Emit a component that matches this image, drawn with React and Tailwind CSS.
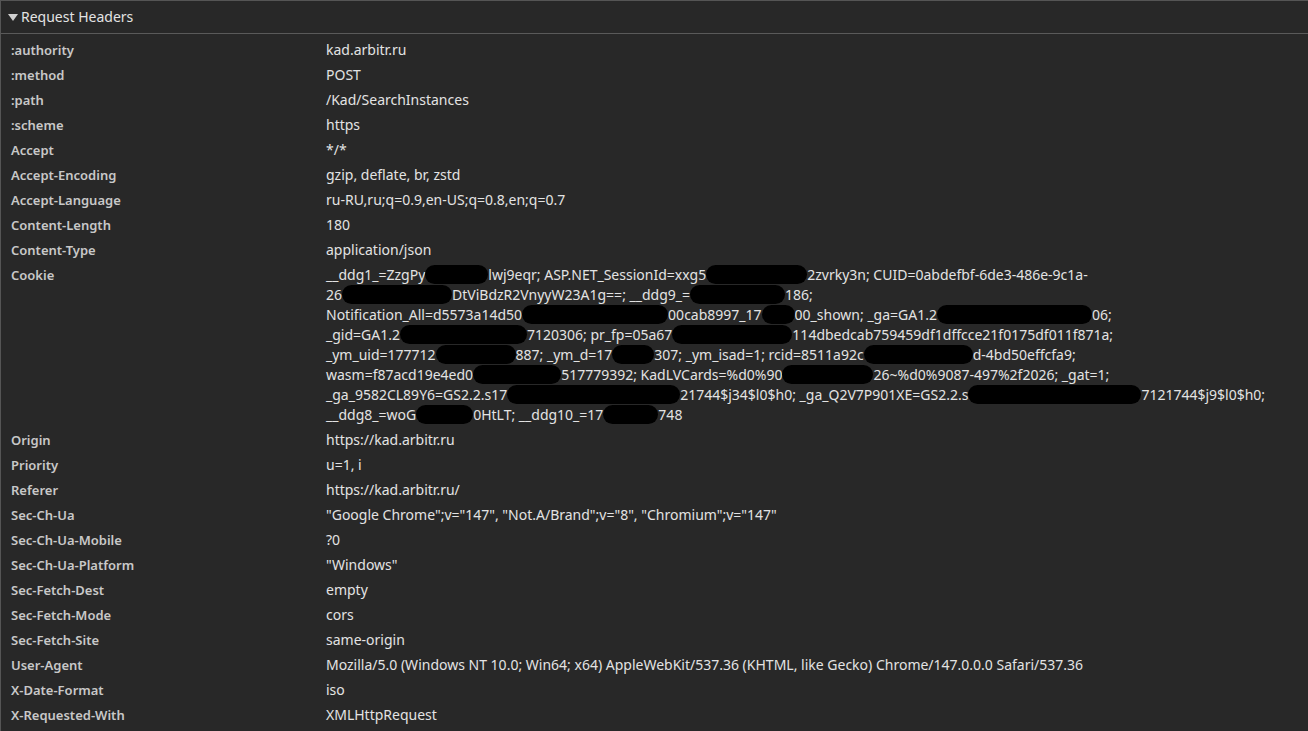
import React from "react";

const rows = [
  [":authority", "kad.arbitr.ru"],
  [":method", "POST"],
  [":path", "/Kad/SearchInstances"],
  [":scheme", "https"],
  ["Accept", "*/*"],
  ["Accept-Encoding", "gzip, deflate, br, zstd"],
  ["Accept-Language", "ru-RU,ru;q=0.9,en-US;q=0.8,en;q=0.7"],
  ["Content-Length", "180"],
  ["Content-Type", "application/json"],
  ["Cookie", null],
  ["Origin", "https://kad.arbitr.ru"],
  ["Priority", "u=1, i"],
  ["Referer", "https://kad.arbitr.ru/"],
  ["Sec-Ch-Ua", "\"Google Chrome\";v=\"147\", \"Not.A/Brand\";v=\"8\", \"Chromium\";v=\"147\""],
  ["Sec-Ch-Ua-Mobile", "?0"],
  ["Sec-Ch-Ua-Platform", "\"Windows\""],
  ["Sec-Fetch-Dest", "empty"],
  ["Sec-Fetch-Mode", "cors"],
  ["Sec-Fetch-Site", "same-origin"],
  ["User-Agent", "Mozilla/5.0 (Windows NT 10.0; Win64; x64) AppleWebKit/537.36 (KHTML, like Gecko) Chrome/147.0.0.0 Safari/537.36"],
  ["X-Date-Format", "iso"],
  ["X-Requested-With", "XMLHttpRequest"],
];

// each line: array of strings (text) or numbers (redaction blob width)
const cookieLines = [
  ["__ddg1_=ZzgPy", 63, "lwj9eqr; ASP.NET_SessionId=xxg5", 101, "2zvrky3n; CUID=0abdefbf-6de3-486e-9c1a-"],
  ["26", 110, "DtViBdzR2VnyyW23A1g==; __ddg9_=", 95, "186;"],
  ["Notification_All=d5573a14d50", 146, "00cab8997_17", 33, "00_shown; _ga=GA1.2", 155, "06;"],
  ["_gid=GA1.2", 127, "7120306; pr_fp=05a67", 120, "114dbedcab759459df1dffcce21f0175df011f871a;"],
  ["_ym_uid=177712", 80, "887; _ym_d=17", 42, "307; _ym_isad=1; rcid=8511a92c", 109, "d-4bd50effcfa9;"],
  ["wasm=f87acd19e4ed0", 88, "517779392; KadLVCards=%d0%90", 91, "26~%d0%9087-497%2f2026; _gat=1;"],
  ["_ga_9582CL89Y6=GS2.2.s17", 173, "21744$j34$l0$h0; _ga_Q2V7P901XE=GS2.2.s", 173, "7121744$j9$l0$h0;"],
  ["__ddg8_=woG", 57, "0HtLT; __ddg10_=17", 55, "748"],
];

function CookieValue() {
  return (
    <div className="flex flex-col">
      {cookieLines.map((line, i) => (
        <div key={i} className="h-[20px] flex items-center whitespace-nowrap">
          {line.map((seg, j) =>
            typeof seg === "number" ? (
              <span
                key={j}
                className="inline-block h-[19px] bg-black rounded-full"
                style={{ width: seg }}
              />
            ) : (
              <span key={j}>{seg}</span>
            )
          )}
        </div>
      ))}
    </div>
  );
}

export default function App() {
  return (
    <div
      className="w-[1308px] h-[731px] overflow-hidden bg-[#282828] border-l border-t border-[#555555] text-[13px]"
      style={{ fontFamily: "'Noto Sans', 'Open Sans', sans-serif" }}
    >
      <div className="h-[33px] flex items-center border-b border-[#5a5a5a] pl-[7px] text-[#e3e3e3] text-[14px]">
        <svg width="10" height="10" viewBox="0 0 10 10" className="mr-[3px]">
          <path d="M0 2 L10 2 L5 9 Z" fill="#d0d0d0" />
        </svg>
        <span className="-mt-[1px]">Request Headers</span>
      </div>
      <div className="pt-[3px]">
        {rows.map(([name, value]) => (
          <div key={name} className="grid grid-cols-[325px_1fr] py-[2.5px] leading-[20px]">
            <div className="pl-[10px] font-semibold text-[#c8c8c8]">{name}</div>
            <div className="text-[#e3e3e3] text-[14px]">
              {value === null ? <CookieValue /> : value}
            </div>
          </div>
        ))}
      </div>
    </div>
  );
}
